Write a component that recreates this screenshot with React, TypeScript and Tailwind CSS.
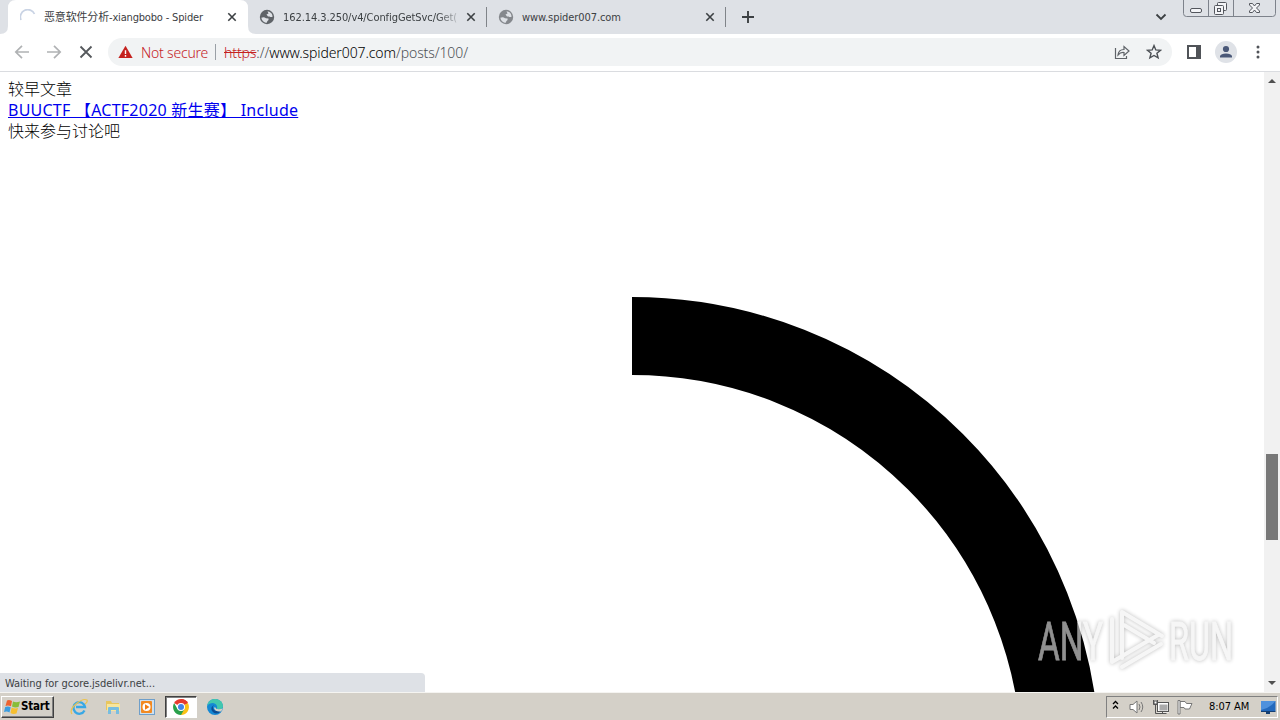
import React from 'react';

interface TabProps {
    title: string;
    icon: React.ReactNode;
    className: string;
    titleClass: string;
}

const CloseIcon = () => (
    <svg viewBox="0 0 10 10" className="w-[10px] h-[10px] shrink-0">
        <path d="M1.3 1.3 8.7 8.7M8.7 1.3 1.3 8.7" stroke="#3c4043" strokeWidth="1.6" />
    </svg>
);

const Globe = ({ color }: { color: string }) => (
    <svg viewBox="0 0 16 16" className="w-4 h-4 shrink-0">
        <circle cx="8" cy="8" r="7.2" fill={color} />
        <path d="M2.3 8.7Q5 7.500 7 9.200L9.500 9.500Q10 11 8.500 12L7.400 13.900Q3.200 13 2.300 8.700M8.500 2.200Q11 2.300 12.800 4.800L13.700 7.500Q12 8.500 10.500 7.500L9 7.500 7.500 5.500 9.500 4.500Z" fill="#dee1e6" />
    </svg>
);

const Tab: React.FC<TabProps> = ({ title, icon, className, titleClass }) => (
    <div className={`flex items-center h-[34px] ${className}`}>
        {icon}
        <span className="ml-2 flex-1 whitespace-nowrap">
            <span className={`block pt-px text-[11px] leading-4 text-[#3c4043] ${titleClass}`}>{title}</span>
        </span>
        <CloseIcon />
    </div>
);

const WindowButtons = () => (
    <svg viewBox="0 0 94 18" className="w-[94px] h-[18px] self-start" fill="none">
        <path d="M.5 0V13.5Q.5 16.5 3.5 16.5H89.5Q92.5 16.5 92.5 13.5V0M25.500 0V16.500M50.500 0V16.500" stroke="#7d828b" />
        <g stroke="#53565d" fill="#f3f4f7">
            <rect x="7.500" y="8.500" width="11" height="4" rx="1.500" />
            <rect x="34.500" y="2.500" width="9" height="8" rx="1" />
            <rect x="31.500" y="5.500" width="9" height="9" rx="1" />
            <rect x="34.500" y="8.500" width="3" height="3" />
            <path d="M66.500 3.500H69.500L71.500 6 73.500 3.500H76.500V5L73.500 8 76.500 11V12.500H73.500L71.500 10 69.500 12.500H66.500V11L69.500 8 66.500 5Z" />
        </g>
    </svg>
);

const TabStrip = () => (
    <div className="relative flex h-[34px] bg-[#dee1e6]">
        <svg viewBox="0 0 256 34" className="absolute left-0 top-0 w-64 h-[34px]">
            <path d="M0 34Q8 34 8 26V8Q8 0 16 0H240Q248 0 248 8V26Q248 34 256 34Z" fill="#fff" />
        </svg>
        <Tab
            title="恶意软件分析-xiangbobo - Spider"
            className="relative w-[240px] ml-2 pl-3 pr-[11px]"
            titleClass="tracking-[-0.17px]"
            icon={
                <svg viewBox="0 0 16 16" className="w-4 h-4 shrink-0" fill="none">
                    <path d="M1 11A7.300 7.300 0 0 1 14.500 5" stroke="#c9d3e4" strokeWidth="1.700" />
                </svg>
            }
        />
        <Tab
            title="162.14.3.250/v4/ConfigGetSvc/Get("
            className="w-[238px] pl-[11px] pr-[10px]"
            titleClass="tracking-[-0.08px] [mask-image:linear-gradient(to_right,#000_155px,transparent_180px)]"
            icon={<Globe color="#5f6368" />}
        />
        <div className="w-px h-5 mt-[7px] bg-[#808489]" />
        <Tab
            title="www.spider007.com"
            className="w-[238px] pl-[11px] pr-[10px]"
            titleClass="tracking-[-0.08px]"
            icon={<Globe color="#85888d" />}
        />
        <div className="w-px h-5 mt-[7px] bg-[#808489]" />
        <svg viewBox="0 0 14 14" className="w-[14px] h-[14px] mt-[10px] ml-[15px]">
            <path d="M7 1V13M1 7H13" stroke="#3c4043" strokeWidth="1.900" />
        </svg>
        <svg viewBox="0 0 12 8" className="w-3 h-2 mt-[13px] ml-auto mr-4" fill="none">
            <path d="m1.500 1.500 4.500 4.500 4.500-4.500" stroke="#3c4043" strokeWidth="1.800" />
        </svg>
        <WindowButtons />
        <div className="w-[3px]" />
    </div>
);

const Toolbar = () => (
    <div className="flex items-center h-[38px] pl-[14px] pr-[10px] pb-[1px] bg-white border-b border-[#dadce0]">
        <svg viewBox="0 0 16 16" className="w-4 h-4" fill="none" stroke="#b0b2b4" strokeWidth="1.700">
            <path d="M15 8H2M8 1.800 1.800 8 8 14.200" />
        </svg>
        <svg viewBox="0 0 16 16" className="w-4 h-4 ml-4" fill="none" stroke="#b0b2b4" strokeWidth="1.700">
            <path d="M1 8h13M8 1.800 14.200 8 8 14.200" />
        </svg>
        <svg viewBox="0 0 16 16" className="w-4 h-4 ml-4" fill="none" stroke="#55585c" strokeWidth="1.800">
            <path d="m2.500 2.500 11 11m0-11-11 11" />
        </svg>
        <div className="flex items-center ml-[14px] w-[1064px] h-7 rounded-full bg-[#f1f3f4] pl-[10px] pr-[10px] text-[14px] font-light whitespace-nowrap font-['Noto_Sans',sans-serif]">
            <svg viewBox="0 0 16 14" className="w-[15px] h-[14px]">
                <path d="M8 .3 15.600 13.500H.4Z" fill="#c5221f" />
                <path d="M8 5V9M8 10.300V12" stroke="#fff" strokeWidth="1.500" />
            </svg>
            <span className="w-[68px] ml-2 text-[#c5221f] tracking-[-0.2px]">Not secure</span>
            <div className="w-px h-4 ml-[6px] mr-2 bg-[#9aa0a6]" />
            <span className="text-[#4c5054] tracking-[-0.1px]">
                <span className="text-[#c5221f] line-through">https</span>://<span className="text-black">www.spider007.com</span>/posts/100/
            </span>
            <svg viewBox="0 0 16 16" className="w-4 h-4 ml-auto" fill="none" stroke="#5f6368" strokeWidth="1.200">
                <path d="M1.500 4V14.500H12.500V12M4 11Q4.500 5.500 10 5.500V2.500L15 7 10 11.500V8.500Q6.500 8 4 11Z" />
            </svg>
            <svg viewBox="0 0 16 16" className="w-4 h-4 ml-4" fill="none" stroke="#4b4f54" strokeWidth="1.400">
                <path d="m8 1.600 1.800 4.300 4.700.4-3.600 3 1.200 4.600L8 11.500l-4.100 2.400 1.200-4.600-3.600-3 4.700-.4Z" />
            </svg>
        </div>
        <svg viewBox="0 0 14 14" className="w-[14px] h-[14px] ml-[15px]">
            <path fillRule="evenodd" d="M0 0H14V14H0ZM2 2V12H9V2Z" fill="#505358" />
        </svg>
        <svg viewBox="0 0 22 22" className="w-[22px] h-[22px] ml-[14px]">
            <circle cx="11" cy="11" r="11" fill="#dfe2e7" />
            <circle cx="11" cy="8" r="3.100" fill="#4a5878" />
            <path d="M5 16.500V15Q6 12.500 11 12.500T17 15V16.500Z" fill="#4a5878" />
        </svg>
        <svg viewBox="0 0 4 14" className="w-1 h-[14px] ml-[19px]" fill="#505358">
            <circle cx="2" cy="2" r="1.500" />
            <circle cx="2" cy="7" r="1.500" />
            <circle cx="2" cy="12" r="1.500" />
        </svg>
    </div>
);

const Watermark = () => (
    <svg viewBox="0 0 220 80" className="absolute left-[1026px] top-[528px] w-[220px] h-20 overflow-visible">
        <g className="[filter:drop-shadow(0_0_2px_rgba(0,0,0,0.45))]" opacity="0.6">
            <g fill="#f1f1f1" stroke="#f1f1f1" strokeWidth="0.8" fontFamily="Roboto, sans-serif" fontSize="53">
                <text x="12" y="60" textLength="65" lengthAdjust="spacingAndGlyphs">ANY</text>
                <text x="143" y="60" textLength="64" lengthAdjust="spacingAndGlyphs">RUN</text>
            </g>
            <g fill="none" stroke="#f1f1f1" strokeWidth="4" strokeLinejoin="round" strokeLinecap="round">
                <path d="M96 58V12L136 36M98 25 128 43" />
                <path d="M86 19V62L132 35M96 67 135 44" />
            </g>
        </g>
    </svg>
);

const Page = () => (
    <div className="relative flex h-[620px] bg-white overflow-hidden">
        <svg viewBox="0 0 1264 620" className="absolute left-0 top-0 w-[1264px] h-[620px]" fill="none">
            <path d="M632 264A429 429 0 0 1 1061 693" stroke="#000" strokeWidth="78" />
        </svg>
        <div className="relative flex-1 flex flex-col">
            <div className="pl-2 pt-[7px] text-base leading-[21px] text-black font-['Noto_Sans','Noto_Sans_CJK_SC',sans-serif]">
                <p className="font-light">较早文章</p>
                <p><a className="text-[#0000ee] underline whitespace-pre tracking-[0.24px]" href="#">BUUCTF 【ACTF2020 新生赛】 Include</a></p>
                <p className="font-light">快来参与讨论吧</p>
            </div>
            <div className="mt-auto w-[425px] h-[19px] pl-[5px] rounded-tr bg-[#dee1e6] text-[11px] leading-[21px] text-[#3c4043]">
                <span className="tracking-[-0.04px]">Waiting for gcore.jsdelivr.net...</span>
            </div>
        </div>
        <Watermark />
        <div className="relative w-4 bg-[#f1f1f1] flex flex-col items-center">
            <svg viewBox="0 0 8 4" className="w-2 h-1 mt-[7px]"><path d="M0 4 4 0 8 4Z" fill="#505050" /></svg>
            <div className="w-3 h-[86px] mt-[371px] bg-[#787878]" />
            <svg viewBox="0 0 8 4" className="w-2 h-1 mt-auto mb-[7px]"><path d="M0 0 4 4 8 0Z" fill="#505050" /></svg>
        </div>
    </div>
);

const TaskBar = () => (
    <div className="flex items-center h-7 pl-px pr-[2px] bg-[#d4d0c8] border-t border-[#f5f4f1]">
        <div className="flex items-center w-[53px] h-[22px] pl-[2px] border border-t-white border-l-white border-r-[#404040] border-b-[#404040] shadow-[inset_-1px_-1px_#808080]">
            <svg viewBox="0 0 16 16" className="w-4 h-4">
                <path d="M3 1.500Q5 .5 8 2L7 7.300Q4 6 1.500 7Z" fill="#ed6330" />
                <path d="M9 2.500Q12 4 16 2.500L14.500 8Q11 9 8 7.500Z" fill="#88bd39" />
                <path d="M1.200 8Q4 7 6.700 8.200L5.500 13.500Q3 12 0 13Z" fill="#3b9de0" />
                <path d="M7.700 8.500Q11 10 14 9L12.500 14.500Q9 15.500 6.500 14Z" fill="#f6bf30" />
            </svg>
            <span className="ml-px text-[11.500px] font-bold text-black tracking-[-0.2px]">Start</span>
        </div>
        <svg viewBox="0 0 18 18" className="w-[18px] h-[18px] ml-[16px]" fill="none">
            <path d="M14.500 12.500A5.800 5.800 0 1 1 15 9H6" stroke="#38a8e5" strokeWidth="2.300" />
            <path d="M2 16Q-1 12 6 6T17 2Q18 4 15 6" stroke="#ecc34d" strokeWidth="1.200" />
        </svg>
        <svg viewBox="0 0 18 18" className="w-[18px] h-[18px] ml-[16px]">
            <path d="M2 3H7L8 5H15V12H2Z" fill="#e8c65f" />
            <path d="M3 6H16V13H3Z" fill="#f8e59c" />
            <path d="M4 16V10Q4 9 5 9H14Q15 9 15 10V16H12V12H7V16Z" fill="#78bde0" />
        </svg>
        <svg viewBox="0 0 18 18" className="w-[18px] h-[18px] ml-[16px]">
            <rect x="1.500" y="1.500" width="15" height="15" fill="#cfe0ee" stroke="#6f9fca" />
            <rect x="3" y="3" width="11" height="12" rx="1" fill="#f28a22" />
            <circle cx="8.500" cy="9" r="4" fill="#fff" />
            <path d="M7 6.300 11.500 9 7 11.700Z" fill="#f07c12" />
        </svg>
        <div className="flex items-center justify-center w-8 h-[22px] ml-[9px] bg-white border border-t-[#404040] border-l-[#404040] border-r-white border-b-white shadow-[inset_1px_1px_#808080]">
            <svg viewBox="0 0 16 16" className="w-4 h-4">
                <path d="M8 8 1.100 4A8 8 0 0 1 14.900 4Z" fill="#e63b2e" />
                <path d="M8 8V0A8 8 0 0 1 14.900 4Z" fill="#e63b2e" />
                <path d="M8 8 14.900 4A8 8 0 0 1 8 16Z" fill="#fbc116" />
                <path d="M8 8 11.500 10 8 16A8 8 0 0 1 1.100 4L4.500 10Z" fill="#29a04b" />
                <circle cx="8" cy="8" r="4" fill="#fff" />
                <circle cx="8" cy="8" r="3" fill="#4285e8" />
            </svg>
        </div>
        <svg viewBox="0 0 18 18" className="w-[18px] h-[18px] ml-[9px]">
            <circle cx="9" cy="9" r="8" fill="#1488d4" />
            <path d="M1 8Q3 0 10 1T17 9Q16 12 11 11Q12 6 7 5Q3 5 1 8Z" fill="#42c7ae" />
            <path d="M7 10Q8 14 15 13Q10 18 6 13Q4 9 8 7Q6 9 7 10Z" fill="#0b4b93" />
            <path d="M9 9Q10 12.500 17 10.500L15 13.500Q9 14 8 10Z" fill="#d4d0c8" />
        </svg>
        <div className="flex items-center ml-auto w-[172px] h-[22px] border border-t-[#808080] border-l-[#808080] border-r-white border-b-white">
            <svg viewBox="0 0 7 10" className="w-[7px] h-[10px] ml-[5px] mb-[3px]" fill="none" stroke="#000" strokeWidth="1.300">
                <path d="m1 4 2.500-2.500L6 4M1 8.500 3.500 6 6 8.500" />
            </svg>
            <svg viewBox="0 0 16 16" className="w-4 h-4 ml-[10px]" fill="none" stroke="#777">
                <path d="M1 5.500H4L8 2V14L4 10.500H1Z" fill="#fff" />
                <path d="M10 5Q12 8 10 11M12 3Q15.500 8 12 13" />
            </svg>
            <svg viewBox="0 0 16 16" className="w-4 h-4 ml-2" fill="none" stroke="#555">
                <rect x="5.500" y="4.500" width="10" height="8" fill="#aaa" stroke="#fff" strokeWidth="2" />
                <rect x="4.500" y="3.500" width="11" height="9" />
                <path d="M.5 1V5.500H4.500V1M2.500 5.500V14.500H13.500M9.500 12.500V14.500" />
                <rect x="1" y="2" width="3" height="3" fill="#fff" />
            </svg>
            <svg viewBox="0 0 16 16" className="w-4 h-4 ml-2" stroke="#777" fill="#fff">
                <path d="M3 2.500H8L9.500 4.500H15L12.500 10H8L7 8.500H3Z" />
                <path d="M1 1.500H3V15H1Z" />
            </svg>
            <span className="ml-4 mt-px w-[44px] text-[11px] whitespace-nowrap text-black tracking-[-0.05px]">8:07 AM</span>
            <svg viewBox="0 0 16 16" className="w-4 h-4 ml-auto mr-px">
                <path d="M1 2H15.500V12H1Z" fill="#2369bd" />
                <path d="M1 2H15.500Q10 9 1 11Z" fill="#4e91dd" />
                <path d="M1 12H15.500V13H1ZM6 13H10V15H6Z" fill="#153f73" />
            </svg>
        </div>
    </div>
);

export default function App() {
    return (
        <div className="w-[1280px] h-[720px] overflow-hidden font-['DejaVu_Sans_Condensed','DejaVu_Sans','Noto_Sans_CJK_SC',sans-serif]">
            <TabStrip />
            <Toolbar />
            <Page />
            <TaskBar />
        </div>
    );
}
